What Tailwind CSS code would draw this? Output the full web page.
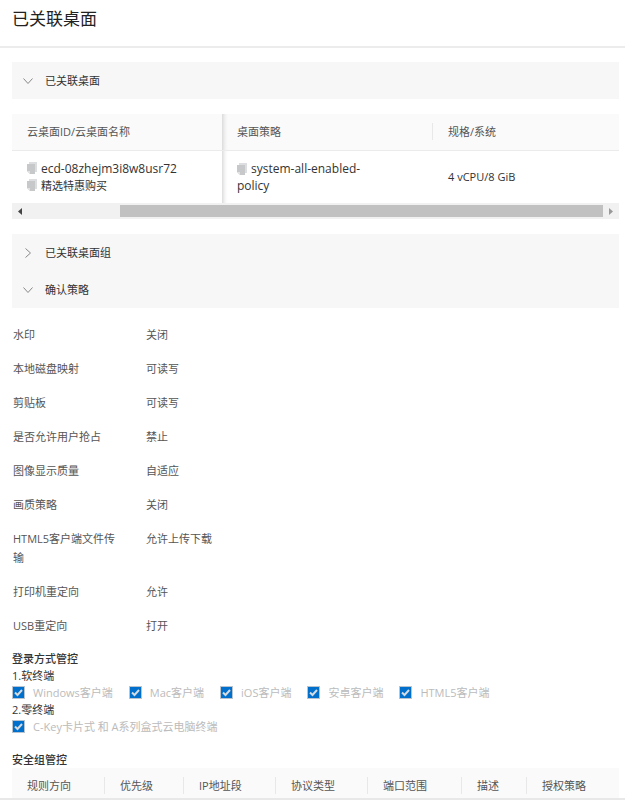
<!DOCTYPE html>
<html lang="zh-CN">
  <head>
    <meta charset="UTF-8" />
    <meta name="viewport" content="width=device-width, initial-scale=1.0" />
    <title>已关联桌面</title>
    <script src="https://cdn.jsdelivr.net/npm/@tailwindcss/browser@4"></script>
  </head>
  <body class="bg-white text-[#333] text-[11px] leading-[17px] font-['Open_Sans','Noto_Sans_CJK_SC',sans-serif]">
    <svg class="hidden">
      <symbol id="copy" viewBox="0 0 10 12">
        <path d="M2 0h8v10H8V2H2z" fill="#dcdee0" />
        <path d="M0 2h8v10H3L0 9z" fill="#c6c8ca" />
        <path d="M0 9h3v3z" fill="#e2e2e2" />
      </symbol>
      <symbol id="tick" viewBox="0 0 13 13">
        <path d="M3 6.500L5.500 9L10 4" fill="none" stroke="#d5dbe0" stroke-width="2" />
      </symbol>
    </svg>
    <header class="border-b-2 border-[#ececec] px-3 pt-2 pb-4">
      <h1 class="text-[17px] leading-[22px] text-[#222]">已关联桌面</h1>
    </header>
    <main class="pt-[14px] pl-3 pr-[6px]">
      <button type="button" class="flex w-full items-center gap-3 bg-[#f7f7f7] px-[11px] py-[10px] text-left">
        <svg class="size-[10px]" viewBox="0 0 10 10" fill="none" stroke="#888"><path d="M.5 2.500L5 7.500L9.500 2.500" /></svg>
        <span>已关联桌面</span>
      </button>

      <!-- desktops -->
      <div class="mt-[15px]">
        <table class="w-full table-fixed text-left">
          <thead>
            <tr class="h-9 border-b border-[#ebebeb] bg-[#fafafa] text-[#555]">
              <th class="w-[210px] pl-[15px] font-normal">云桌面ID/云桌面名称</th>
              <th class="w-[211px] p-0 font-normal shadow-[inset_6px_0_5px_-5px_#ccc]">
                <div class="border-r border-[#e8e8e8] pl-[15px]">桌面策略</div>
              </th>
              <th class="pl-[15px] font-normal">规格/系统</th>
            </tr>
          </thead>
          <tbody>
            <tr class="h-[53px]">
              <td class="pl-[15px]">
                <div class="flex items-center gap-1"><svg class="h-3 w-[10px]"><use href="#copy" /></svg><span class="text-xs leading-[17px]">ecd-08zhejm3i8w8usr72</span></div>
                <div class="flex items-center gap-1"><svg class="h-3 w-[10px]"><use href="#copy" /></svg><span>精选特惠购买</span></div>
              </td>
              <td class="pl-[15px] text-xs leading-[17px] shadow-[inset_6px_0_5px_-5px_#ccc]">
                <svg class="mr-1 inline h-3 w-[10px] align-[-2px]"><use href="#copy" /></svg>system-all-enabled-<br />policy
              </td>
              <td class="pl-[15px]">4 vCPU/8 GiB</td>
            </tr>
          </tbody>
        </table>
        <div class="flex h-4 items-center bg-[#f1f1f1]">
          <button type="button" aria-label="向左滚动" class="flex h-full w-4 items-center justify-center">
            <svg class="h-[7px] w-1" viewBox="0 0 4 7"><path d="M4 0v7L0 3.500z" fill="#444" /></svg>
          </button>
          <div class="flex h-3 flex-1 justify-end"><div class="w-[84%] bg-[#c1c1c1]"></div></div>
          <button type="button" aria-label="向右滚动" class="flex h-full w-4 items-center justify-center">
            <svg class="h-[7px] w-1" viewBox="0 0 4 7"><path d="M0 0v7L4 3.500z" fill="#999" /></svg>
          </button>
        </div>
      </div>

      <div class="mt-[15px] bg-[#f7f7f7]">
        <button type="button" class="flex w-full items-center gap-3 px-[11px] py-[10px] text-left">
          <svg class="size-[10px]" viewBox="0 0 10 10" fill="none" stroke="#888"><path d="M2.500 .5L7.500 5L2.500 9.500" /></svg>
          <span>已关联桌面组</span>
        </button>
        <button type="button" class="flex w-full items-center gap-3 px-[11px] py-[10px] text-left">
          <svg class="size-[10px]" viewBox="0 0 10 10" fill="none" stroke="#888"><path d="M.5 2.500L5 7.500L9.500 2.500" /></svg>
          <span>确认策略</span>
        </button>
      </div>

      <!-- policy -->
      <dl class="mt-[17px] grid grid-cols-[107px_1fr] gap-x-[26px] gap-y-[15px] pl-px leading-[19px] text-[#555]">
        <dt>水印</dt><dd>关闭</dd>
        <dt>本地磁盘映射</dt><dd>可读写</dd>
        <dt>剪贴板</dt><dd>可读写</dd>
        <dt>是否允许用户抢占</dt><dd>禁止</dd>
        <dt>图像显示质量</dt><dd>自适应</dd>
        <dt>画质策略</dt><dd>关闭</dd>
        <dt>HTML5客户端文件传输</dt><dd>允许上传下载</dd>
        <dt>打印机重定向</dt><dd>允许</dd>
        <dt>USB重定向</dt><dd>打开</dd>
      </dl>

      <!-- login -->
      <section class="mt-[15px]">
        <h2 class="font-medium">登录方式管控</h2>
        <p>1.软终端</p>
        <div class="flex gap-4 text-[#bbb]">
          <label class="flex items-center gap-2"><span class="relative flex"><input type="checkbox" checked disabled class="size-[13px] appearance-none border border-[#b8c4d0] bg-[#0070cc]" /><svg class="absolute inset-0 size-[13px]"><use href="#tick" /></svg></span>Windows客户端</label>
          <label class="flex items-center gap-2"><span class="relative flex"><input type="checkbox" checked disabled class="size-[13px] appearance-none border border-[#b8c4d0] bg-[#0070cc]" /><svg class="absolute inset-0 size-[13px]"><use href="#tick" /></svg></span>Mac客户端</label>
          <label class="flex items-center gap-2"><span class="relative flex"><input type="checkbox" checked disabled class="size-[13px] appearance-none border border-[#b8c4d0] bg-[#0070cc]" /><svg class="absolute inset-0 size-[13px]"><use href="#tick" /></svg></span>iOS客户端</label>
          <label class="flex items-center gap-2"><span class="relative flex"><input type="checkbox" checked disabled class="size-[13px] appearance-none border border-[#b8c4d0] bg-[#0070cc]" /><svg class="absolute inset-0 size-[13px]"><use href="#tick" /></svg></span>安卓客户端</label>
          <label class="flex items-center gap-2"><span class="relative flex"><input type="checkbox" checked disabled class="size-[13px] appearance-none border border-[#b8c4d0] bg-[#0070cc]" /><svg class="absolute inset-0 size-[13px]"><use href="#tick" /></svg></span>HTML5客户端</label>
        </div>
        <p>2.零终端</p>
        <div class="flex text-[#bbb]">
          <label class="flex items-center gap-2"><span class="relative flex"><input type="checkbox" checked disabled class="size-[13px] appearance-none border border-[#b8c4d0] bg-[#0070cc]" /><svg class="absolute inset-0 size-[13px]"><use href="#tick" /></svg></span>C-Key卡片式 和 A系列盒式云电脑终端</label>
        </div>
      </section>

      <!-- security group -->
      <section class="mt-4">
        <h2 class="font-medium">安全组管控</h2>
        <table class="w-full table-fixed text-left">
          <thead>
            <tr class="h-[30px] bg-[#fafafa] text-[#555]">
              <th class="w-[93px] p-0 pt-1 font-normal"><div class="border-r border-[#e8e8e8] pl-[15px]">规则方向</div></th>
              <th class="w-[79px] p-0 pt-1 font-normal"><div class="border-r border-[#e8e8e8] pl-[15px]">优先级</div></th>
              <th class="w-[92px] p-0 pt-1 font-normal"><div class="border-r border-[#e8e8e8] pl-[15px]">IP地址段</div></th>
              <th class="w-[92px] p-0 pt-1 font-normal"><div class="border-r border-[#e8e8e8] pl-[15px]">协议类型</div></th>
              <th class="w-[94px] p-0 pt-1 font-normal"><div class="border-r border-[#e8e8e8] pl-[15px]">端口范围</div></th>
              <th class="w-[65px] p-0 pt-1 font-normal"><div class="border-r border-[#e8e8e8] pl-[15px]">描述</div></th>
              <th class="p-0 pt-1 font-normal"><div class="pl-[15px]">授权策略</div></th>
            </tr>
          </thead>
        </table>
      </section>
    </main>
    <footer class="border-t-2 border-[#e8e8e8]"></footer>
  </body>
</html>
